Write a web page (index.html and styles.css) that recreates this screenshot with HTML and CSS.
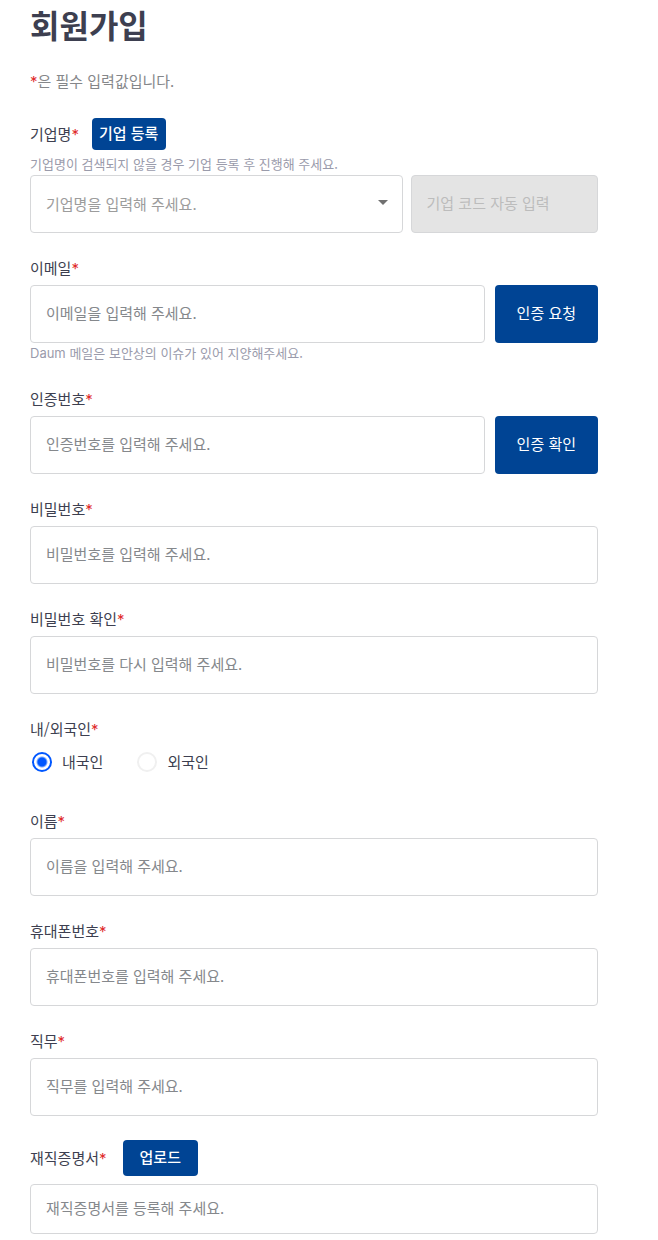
FILE: index.html
```
<!DOCTYPE html>
<html lang="ko">
<head>
  <meta charset="UTF-8" />
  <meta name="viewport" content="width=device-width, initial-scale=1.0" />
  <title>회원가입</title>
  <link rel="stylesheet" href="styles.css">
</head>
<body>
  <main class="signup">
    <h1>회원가입</h1>
    <p class="notice"><span class="required">*</span>은 필수 입력값입니다.</p>
    <form id="signupForm">
      <div class="form-group">
        <div class="label-row company-row">
          <label for="company">기업명<span class="required">*</span></label>
          <button type="button" class="btn btn-small">기업 등록</button>
        </div>
        <p class="hint">기업명이 검색되지 않을 경우 기업 등록 후 진행해 주세요.</p>
        <div class="company-fields">
          <div class="select-wrap">
            <select id="company" name="company" class="field">
              <option value="">기업명을 입력해 주세요.</option>
            </select>
            <svg class="arrow" viewBox="0 0 24 24" aria-hidden="true"><path d="M7 10l5 5 5-5z" /></svg>
          </div>
          <input type="text" class="field code" name="companyCode" placeholder="기업 코드 자동 입력" aria-label="기업 코드" disabled />
        </div>
      </div>
      <div class="form-group">
        <label for="email">이메일<span class="required">*</span></label>
        <div class="field-row">
          <input type="email" id="email" name="email" class="field" placeholder="이메일을 입력해 주세요." />
          <button type="button" class="btn btn-large">인증 요청</button>
        </div>
        <p class="hint"><span class="latin">Daum</span> 메일은 보안상의 이슈가 있어 지양해주세요.</p>
      </div>
      <div class="form-group">
        <label for="code">인증번호<span class="required">*</span></label>
        <div class="field-row">
          <input type="text" id="code" name="code" class="field" placeholder="인증번호를 입력해 주세요." />
          <button type="button" class="btn btn-large">인증 확인</button>
        </div>
      </div>
      <div class="form-group">
        <label for="password">비밀번호<span class="required">*</span></label>
        <input type="password" id="password" name="password" class="field" placeholder="비밀번호를 입력해 주세요." />
      </div>
      <div class="form-group">
        <label for="passwordCheck">비밀번호 확인<span class="required">*</span></label>
        <input type="password" id="passwordCheck" name="passwordCheck" class="field" placeholder="비밀번호를 다시 입력해 주세요." />
      </div>
      <fieldset class="form-group nationality">
        <legend>내/외국인<span class="required">*</span></legend>
        <div class="radio-row">
          <label class="radio"><input type="radio" name="nationality" value="domestic" checked />내국인</label>
          <label class="radio"><input type="radio" name="nationality" value="foreign" />외국인</label>
        </div>
      </fieldset>
      <div class="form-group">
        <label for="name">이름<span class="required">*</span></label>
        <input type="text" id="name" name="name" class="field" placeholder="이름을 입력해 주세요." />
      </div>
      <div class="form-group">
        <label for="phone">휴대폰번호<span class="required">*</span></label>
        <input type="tel" id="phone" name="phone" class="field" placeholder="휴대폰번호를 입력해 주세요." />
      </div>
      <div class="form-group">
        <label for="job">직무<span class="required">*</span></label>
        <input type="text" id="job" name="job" class="field" placeholder="직무를 입력해 주세요." />
      </div>
      <div class="form-group">
        <div class="label-row upload-row">
          <label for="certificate">재직증명서<span class="required">*</span></label>
          <button type="button" class="btn btn-upload">업로드</button>
        </div>
        <input type="text" id="certificate" name="certificate" class="field field-short" placeholder="재직증명서를 등록해 주세요." readonly />
      </div>
    </form>
  </main>
</body>
</html>
```
FILE: styles.css
```
/* Reset and base styling */
* { box-sizing: border-box; margin: 0; padding: 0; }
body {
  font-family: "Noto Sans CJK KR", sans-serif;
  font-size: 15px;
  line-height: 22px;
  color: #3d3f50;
  background: #fff;
}
input, select, button { font: inherit; }
.signup { padding: 0 60px 6px 30px; }
h1 {
  margin-bottom: 22px;
  font-size: 32px;
  line-height: 48px;
  font-weight: 700;
}
.notice { margin-bottom: 26px; color: #85878a; }
.required { font-family: Inter, sans-serif; line-height: 1; color: #e02b2b; }
.latin { font-family: Inter, sans-serif; line-height: 1; }

/* Form rows */
.form-group { margin-bottom: 24px; border: none; }
.form-group:last-child { margin-bottom: 0; }
.form-group > label, legend { display: block; margin-bottom: 6px; }
.label-row { display: flex; align-items: center; }
.company-row { gap: 13px; margin-bottom: 4px; }
.upload-row { gap: 16px; margin-bottom: 8px; }
.hint {
  padding-bottom: 2px;
  font-size: 13px;
  line-height: 19px;
  color: #9a9bab;
}
.company-fields { display: flex; gap: 8px; }
.field-row { display: flex; gap: 10px; }

/* Fields */
.field {
  display: block;
  width: 100%;
  min-width: 0;
  height: 58px;
  padding: 0 15px 4px;
  border: 1px solid #d6d7d9;
  border-radius: 4px;
  background: #fff;
  color: #3d3f50;
}
.field::placeholder { color: #85888c; opacity: 1; }
.field-short { height: 50px; }
.select-wrap { position: relative; flex: 1; }
select.field { appearance: none; padding-bottom: 0; color: #9c9c9c; }
.arrow {
  position: absolute; right: 8px; top: 15px;
  width: 24px; height: 24px;
  fill: #707070; pointer-events: none;
}
.code { flex: none; width: 33%; background: #e4e4e4; }
.code::placeholder { color: #bcbcbc; }

/* Buttons */
.btn {
  flex: none;
  padding-bottom: 2px;
  border: none;
  border-radius: 4px;
  background: #004494;
  color: #fff;
  cursor: pointer;
}
.btn-small { height: 32px; padding-left: 7px; padding-right: 8px; font-weight: 500; }
.btn-large { padding-left: 22px; padding-right: 22px; }
.btn-upload { height: 36px; padding-left: 17px; padding-right: 17px; font-weight: 500; }

/* Radio buttons */
.nationality { padding-bottom: 8px; }
.radio-row { display: flex; gap: 34px; padding-left: 2px; }
.radio { display: flex; align-items: center; gap: 10px; height: 32px; }
.radio input {
  appearance: none;
  width: 20px; height: 20px;
  border: 2px solid #f0f0f0;
  border-radius: 50%;
}
.radio input:checked {
  border-color: #0057ff;
  background: radial-gradient(circle, #0057ff 4px, #fff 6px);
}
```
